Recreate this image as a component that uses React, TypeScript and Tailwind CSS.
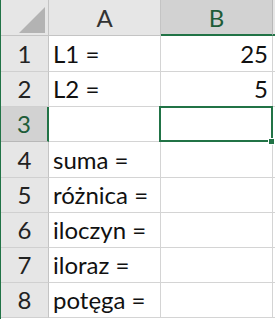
const rows: { n: number; a: string; b: string; h: string }[] = [
  { n: 1, a: "L1 =", b: "25", h: "h-[36px]" },
  { n: 2, a: "L2 =", b: "5", h: "h-[35px]" },
  { n: 3, a: "", b: "", h: "h-[35px]" },
  { n: 4, a: "suma =", b: "", h: "h-[36px]" },
  { n: 5, a: "różnica =", b: "", h: "h-[35px]" },
  { n: 6, a: "iloczyn =", b: "", h: "h-[35px]" },
  { n: 7, a: "iloraz =", b: "", h: "h-[35px]" },
  { n: 8, a: "potęga =", b: "", h: "h-[35px]" },
];

export default function App() {
  return (
    <div
      className="w-[275px] h-[319px] overflow-hidden bg-white border-l border-[#217346] text-[24px] leading-[24px] text-[#111]"
      style={{ fontFamily: "Lato, 'Liberation Sans', sans-serif" }}
    >
      {/* column headers */}
      <div className="flex h-[36px]">
        <div className="w-[48px] shrink-0 bg-[#e6e6e6] border-r border-b border-[#c4c4c4] relative">
          <svg width="48" height="35" className="absolute left-0 top-0">
            <polygon points="44,7 44,33 18,33" fill="#b3b3b3" />
          </svg>
        </div>
        <div className="w-[112px] shrink-0 bg-[#e6e6e6] border-r border-b border-[#c4c4c4] flex items-end justify-center pb-[5px] text-[#333]">
          A
        </div>
        <div className="w-[112px] shrink-0 bg-[#d2d2d2] border-r border-[#b8b8b8] border-b-2 border-b-[#217346] flex items-end justify-center pb-[4px] text-[#1e5c38]">
          B
        </div>
        <div className="flex-1 bg-[#e6e6e6] border-b-2 border-[#217346]" />
      </div>

      {rows.map((r) => {
        const sel = r.n === 3;
        return (
          <div key={r.n} className={`flex ${r.h}`}>
            <div
              className={`w-[48px] shrink-0 border-b flex items-end justify-center pb-[5px] ${
                sel
                  ? "bg-[#d2d2d2] border-b-[#b8b8b8] border-r-2 border-r-[#217346] text-[#1e5c38]"
                  : "bg-[#e6e6e6] border-b-[#d0d0d0] border-r border-r-[#c4c4c4] text-[#222]"
              }`}
            >
              {r.n}
            </div>
            <div className="w-[112px] shrink-0 border-r border-b border-[#d4d4d4] flex items-end pl-[4px] pb-[5px] whitespace-nowrap">
              {r.a}
            </div>
            <div className="w-[112px] shrink-0 border-r border-b border-[#d4d4d4] flex items-end justify-end pr-[4px] pb-[5px] relative">
              {r.b}
              {sel && (
                <>
                  <div className="absolute z-10 -left-[2px] -top-[1px] -right-[1px] -bottom-[1px] border-2 border-[#217346]" />
                  <div className="absolute z-20 -right-[3px] -bottom-[4px] w-[7px] h-[7px] bg-[#217346] border border-white" />
                </>
              )}
            </div>
            <div className="flex-1 border-b border-[#d4d4d4]" />
          </div>
        );
      })}
    </div>
  );
}
